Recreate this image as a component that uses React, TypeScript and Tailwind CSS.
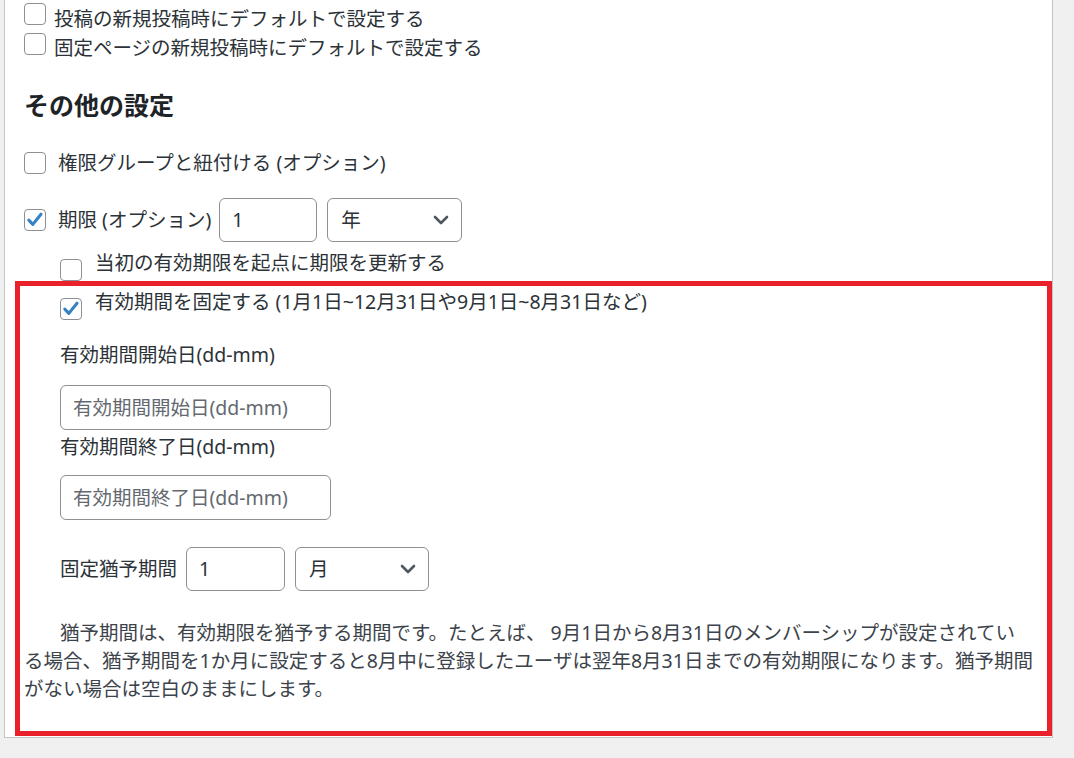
import React from "react";

function Box({ checked, className = "" }: { checked?: boolean; className?: string }) {
  return (
    <span
      className={`inline-flex h-[22px] w-[22px] shrink-0 items-center justify-center rounded-[4px] border border-[#8c8f94] bg-white ${className}`}
    >
      {checked && (
        <svg viewBox="0 0 22 22" className="h-[22px] w-[22px]">
          <path d="M4.2 11.2 L8.6 15.8 L17.6 4.6" fill="none" stroke="#3582c4" strokeWidth="3.4" strokeLinecap="round" strokeLinejoin="round" />
        </svg>
      )}
    </span>
  );
}

function Chevron() {
  return (
    <svg viewBox="0 0 16 10" className="h-[10px] w-[16px]">
      <path d="M2 2l6 6 6-6" fill="none" stroke="#50575e" strokeWidth="2.6" strokeLinecap="round" strokeLinejoin="round" />
    </svg>
  );
}

function Field({ children, className = "", muted }: { children: React.ReactNode; className?: string; muted?: boolean }) {
  return (
    <div
      className={`flex items-center rounded-[6px] border border-[#8c8f94] bg-white pl-[12px] ${muted ? "text-[#646970]" : "text-[#2c3338]"} ${className}`}
    >
      {children}
    </div>
  );
}

function Select({ value, className = "" }: { value: string; className?: string }) {
  return (
    <div
      className={`flex items-center justify-between rounded-[6px] border border-[#8c8f94] bg-white pl-[13px] pr-[12px] text-[#2c3338] ${className}`}
    >
      <span>{value}</span>
      <Chevron />
    </div>
  );
}

export default function App() {
  return (
    <div
      className="min-h-[758px] w-full bg-[#f0f0f1] text-[19.5px] text-[#2c3338]"
      style={{ fontFamily: '"Noto Sans", "Noto Sans CJK JP", sans-serif' }}
    >
      <div className="ml-[4px] w-[1049px] border-x border-b border-[#c3c4c7] bg-white pb-[1px] pl-[19px] pt-[4px]">
        <div className="flex h-[29px] items-center leading-[29px]">
          <Box className="mb-[9px]" />
          <span className="ml-[8px]">投稿の新規投稿時にデフォルトで設定する</span>
        </div>
        <div className="flex h-[29px] items-center leading-[29px]">
          <Box className="mb-[7px]" />
          <span className="ml-[8px]">固定ページの新規投稿時にデフォルトで設定する</span>
        </div>

        <h2 className="mt-[26px] text-[25px] font-bold leading-[34px] text-[#1d2327]">その他の設定</h2>

        <div className="mt-[26px] flex h-[30px] items-center leading-[30px]">
          <Box />
          <span className="ml-[12px]">権限グループと紐付ける (オプション)</span>
        </div>

        <div className="mt-[20px] flex h-[44px] items-center">
          <Box checked />
          <span className="ml-[12px]">期限 (オプション)</span>
          <Field className="ml-[8px] h-[44px] w-[98px]">1</Field>
          <Select value="年" className="ml-[10px] h-[44px] w-[135px]" />
        </div>

        <div className="mt-[7px] flex h-[28px] items-center pl-[36px] leading-[28px]">
          <Box className="mt-[13px]" />
          <span className="ml-[13px]">当初の有効期限を起点に期限を更新する</span>
        </div>

        <div className="-ml-[9px] mt-[4px] border-[5px] border-[#e8212b] pb-[28px] pl-[4px]">
          <div className="flex h-[32px] items-center pl-[36px] leading-[32px]">
            <Box checked className="mt-[14px]" />
            <span className="ml-[13px]">有効期間を固定する (1月1日~12月31日や9月1日~8月31日など)</span>
          </div>

          <div className="mt-[23px] pl-[36px] leading-[28px]">有効期間開始日(dd-mm)</div>
          <Field muted className="ml-[36px] mt-[16px] h-[45px] w-[271px]">
            有効期間開始日(dd-mm)
          </Field>
          <div className="mt-[3px] pl-[36px] leading-[28px]">有効期間終了日(dd-mm)</div>
          <Field muted className="ml-[36px] mt-[14px] h-[45px] w-[271px]">
            有効期間終了日(dd-mm)
          </Field>

          <div className="mt-[27px] flex h-[44px] items-center pl-[36px]">
            <span>固定猶予期間</span>
            <Field className="ml-[9px] h-[44px] w-[99px]">1</Field>
            <Select value="月" className="ml-[10px] h-[44px] w-[134px]" />
          </div>

          <p className="mt-[28px] pr-[4px] indent-[36px] leading-[28px] text-[#3c434a]">
            猶予期間は、有効期限を猶予する期間です。たとえば、 9月1日から8月31日のメンバーシップが設定されてい
            <br />
            る場合、猶予期間を1か月に設定すると8月中に登録したユーザは翌年8月31日までの有効期限になります。猶予期間
            <br />
            がない場合は空白のままにします。
          </p>
        </div>
      </div>
    </div>
  );
}
